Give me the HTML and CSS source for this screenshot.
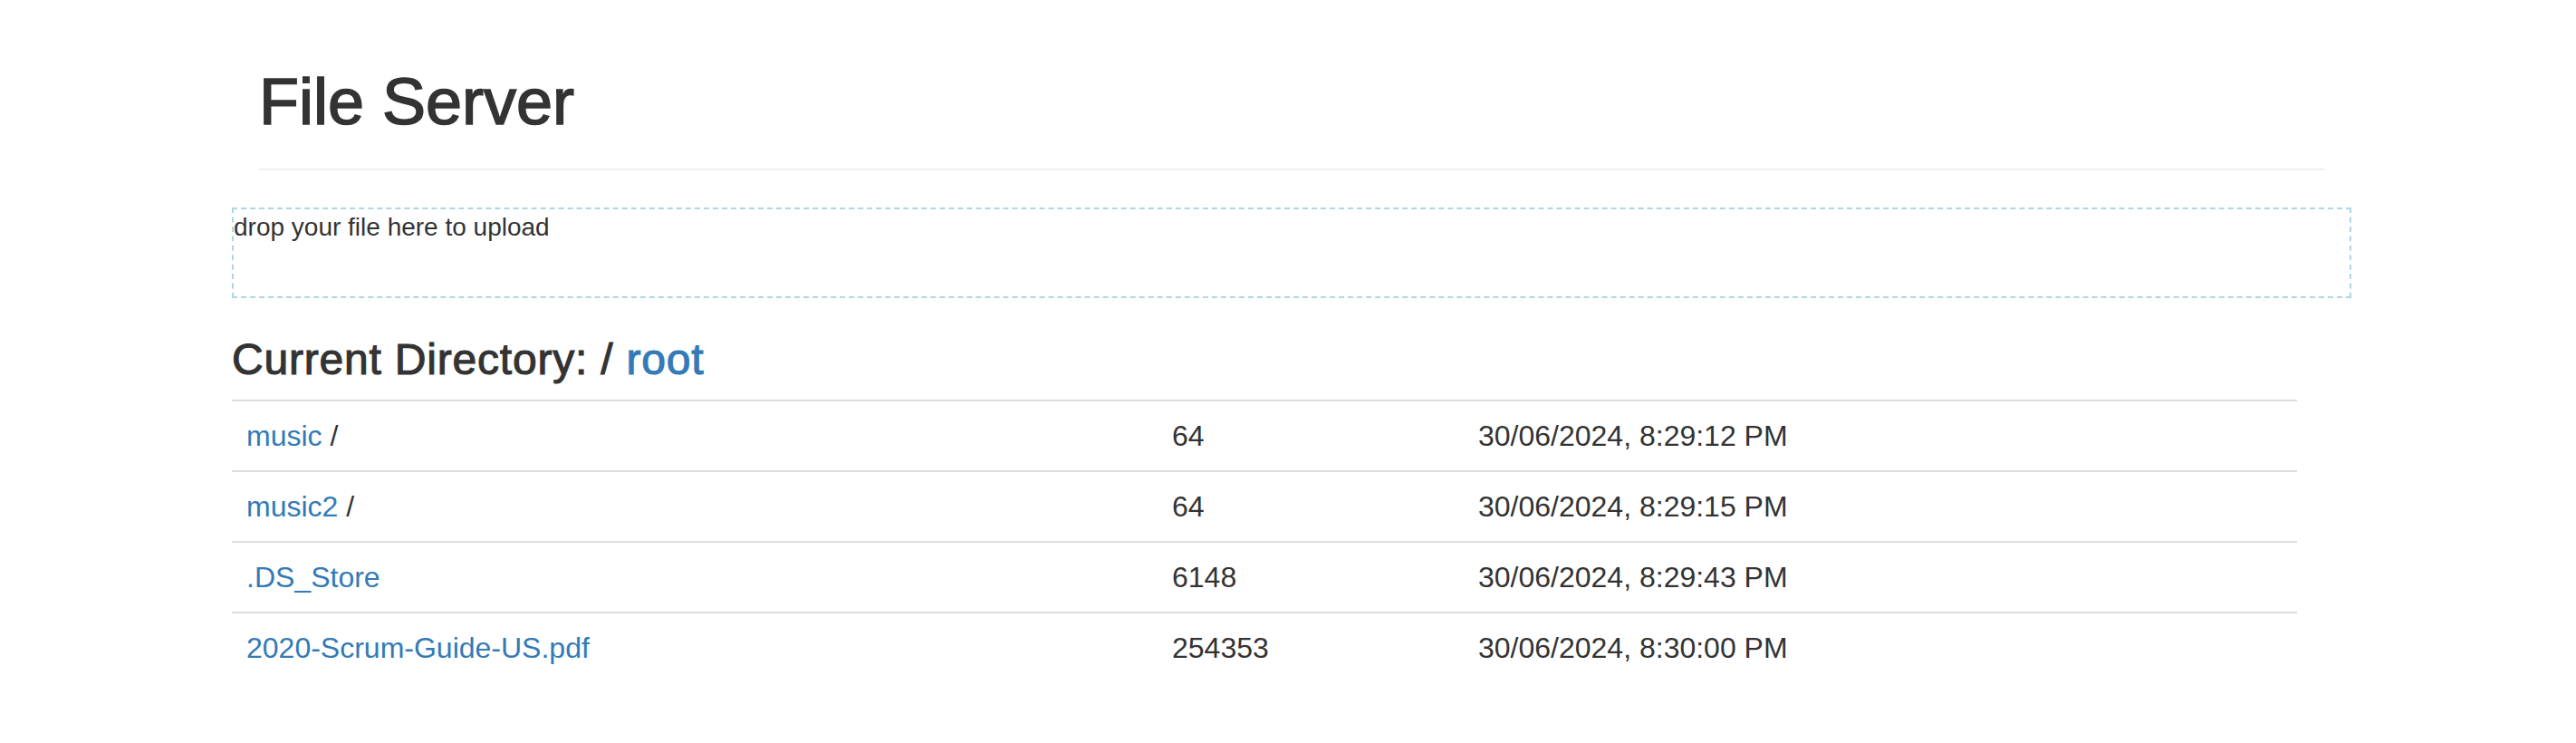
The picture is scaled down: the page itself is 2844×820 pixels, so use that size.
FILE: index.html
```html
<!DOCTYPE html>
<html lang="en">
<head>
<meta charset="utf-8">
<title>File Server</title>
<link rel="stylesheet" href="styles.css">
</head>
<body>
<div class="page">
  <div class="page-header">
    <h1 class="title">File Server</h1>
  </div>
  <div class="dropzone">drop your file here to upload</div>
  <h3 class="current">Current Directory: / <a href="#" class="link">root</a></h3>
  <table class="files">
    <colgroup>
      <col class="c-name">
      <col class="c-size">
      <col class="c-date">
    </colgroup>
    <tbody>
      <tr><td><a href="#" class="link">music</a> /</td><td>64</td><td>30/06/2024, 8:29:12 PM</td></tr>
      <tr><td><a href="#" class="link">music2</a> /</td><td>64</td><td>30/06/2024, 8:29:15 PM</td></tr>
      <tr><td><a href="#" class="link">.DS_Store</a></td><td>6148</td><td>30/06/2024, 8:29:43 PM</td></tr>
      <tr><td><a href="#" class="link">2020-Scrum-Guide-US.pdf</a></td><td>254353</td><td>30/06/2024, 8:30:00 PM</td></tr>
    </tbody>
  </table>
</div>
</body>
</html>
```
FILE: styles.css
```css
html, body {
  margin: 0;
  padding: 0;
  background: #fff;
}
body {
  font-family: "Liberation Sans", Arial, Helvetica, sans-serif;
  font-size: 28px;
  line-height: 40px;
  color: #333;
}
.page {
  width: 2340px;
  margin-left: calc(50% - 1166px);
}
.page-header {
  margin: 72px 30px 0 30px;
  padding-bottom: 34px;
  border-bottom: 2px solid #eee;
}
.title {
  margin: 0;
  font-size: 72px;
  line-height: 80px;
  font-weight: 400;
  -webkit-text-stroke: 1.6px #333;
  color: #333;
}
.dropzone {
  box-sizing: border-box;
  margin-top: 41px;
  height: 100px;
  border: 2px dashed #b0d6e3;
  font-size: 28px;
  line-height: 40px;
}
.current {
  margin: 42px 0 18px 0;
  font-size: 48px;
  line-height: 52px;
  font-weight: 400;
  letter-spacing: 0.8px;
  -webkit-text-stroke: 1.1px currentColor;
  color: #333;
}
.link {
  color: #337ab7;
  text-decoration: none;
}
.files {
  width: 2280px;
  table-layout: fixed;
  border-collapse: collapse;
  border-spacing: 0;
  font-size: 32px;
  line-height: 44px;
}
.c-name { width: 1022px; }
.c-size { width: 338px; }
.c-date { width: 920px; }
.files td {
  padding: 16px;
  border-top: 2px solid #ddd;
  vertical-align: top;
  white-space: nowrap;
}
```
